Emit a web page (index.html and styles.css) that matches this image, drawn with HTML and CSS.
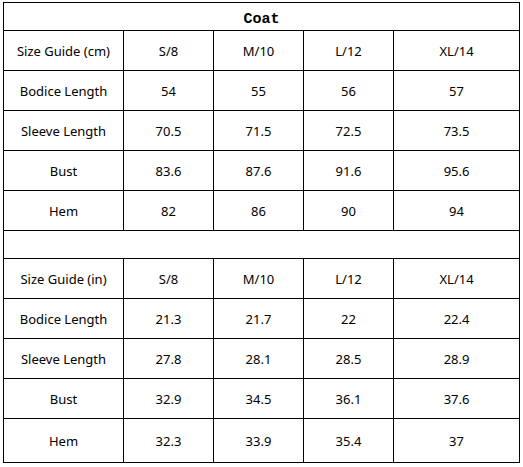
FILE: index.html
```html
<!DOCTYPE html>
<html>
<head>
<meta charset="utf-8">
<link rel="stylesheet" href="styles.css">
</head>
<body>
<table class="size-table">
  <colgroup>
    <col class="c-label"><col class="c-size"><col class="c-size"><col class="c-size"><col class="c-last">
  </colgroup>
  <tr class="r-title"><td colspan="5" class="title">Coat</td></tr>
  <tr class="r-data"><td>Size Guide (cm)</td><td>S/8</td><td>M/10</td><td>L/12</td><td>XL/14</td></tr>
  <tr class="r-data"><td>Bodice Length</td><td>54</td><td>55</td><td>56</td><td>57</td></tr>
  <tr class="r-data"><td>Sleeve Length</td><td>70.5</td><td>71.5</td><td>72.5</td><td>73.5</td></tr>
  <tr class="r-data"><td>Bust</td><td>83.6</td><td>87.6</td><td>91.6</td><td>95.6</td></tr>
  <tr class="r-data"><td>Hem</td><td>82</td><td>86</td><td>90</td><td>94</td></tr>
  <tr class="r-blank"><td colspan="5"></td></tr>
  <tr class="r-data"><td>Size Guide (in)</td><td>S/8</td><td>M/10</td><td>L/12</td><td>XL/14</td></tr>
  <tr class="r-data"><td>Bodice Length</td><td>21.3</td><td>21.7</td><td>22</td><td>22.4</td></tr>
  <tr class="r-data"><td>Sleeve Length</td><td>27.8</td><td>28.1</td><td>28.5</td><td>28.9</td></tr>
  <tr class="r-data"><td>Bust</td><td>32.9</td><td>34.5</td><td>36.1</td><td>37.6</td></tr>
  <tr class="r-end"><td>Hem</td><td>32.3</td><td>33.9</td><td>35.4</td><td>37</td></tr>
</table>
</body>
</html>
```
FILE: styles.css
```css
html, body {
  margin: 0;
  padding: 0;
  background: #fff;
}
body {
  padding: 2px 0 0 3px;
  font-family: "Noto Sans", "Open Sans", sans-serif;
  font-size: 13px;
  color: #000;
}
.size-table {
  border-collapse: collapse;
  table-layout: fixed;
  width: 517px;
}
.size-table td {
  border: 1px solid #000;
  padding: 0;
  text-align: center;
  vertical-align: middle;
  line-height: 16px;
}
.c-label { width: 120px; }
.c-size { width: 90px; }
.c-last { width: 126px; }
.r-title { height: 28px; }
.r-data { height: 40px; }
.r-blank { height: 28px; }
.r-end { height: 44px; }
.size-table .title {
  font-family: "Liberation Mono", "DejaVu Sans Mono", monospace;
  font-weight: bold;
  font-size: 15px;
  padding-top: 7px;
}
```
